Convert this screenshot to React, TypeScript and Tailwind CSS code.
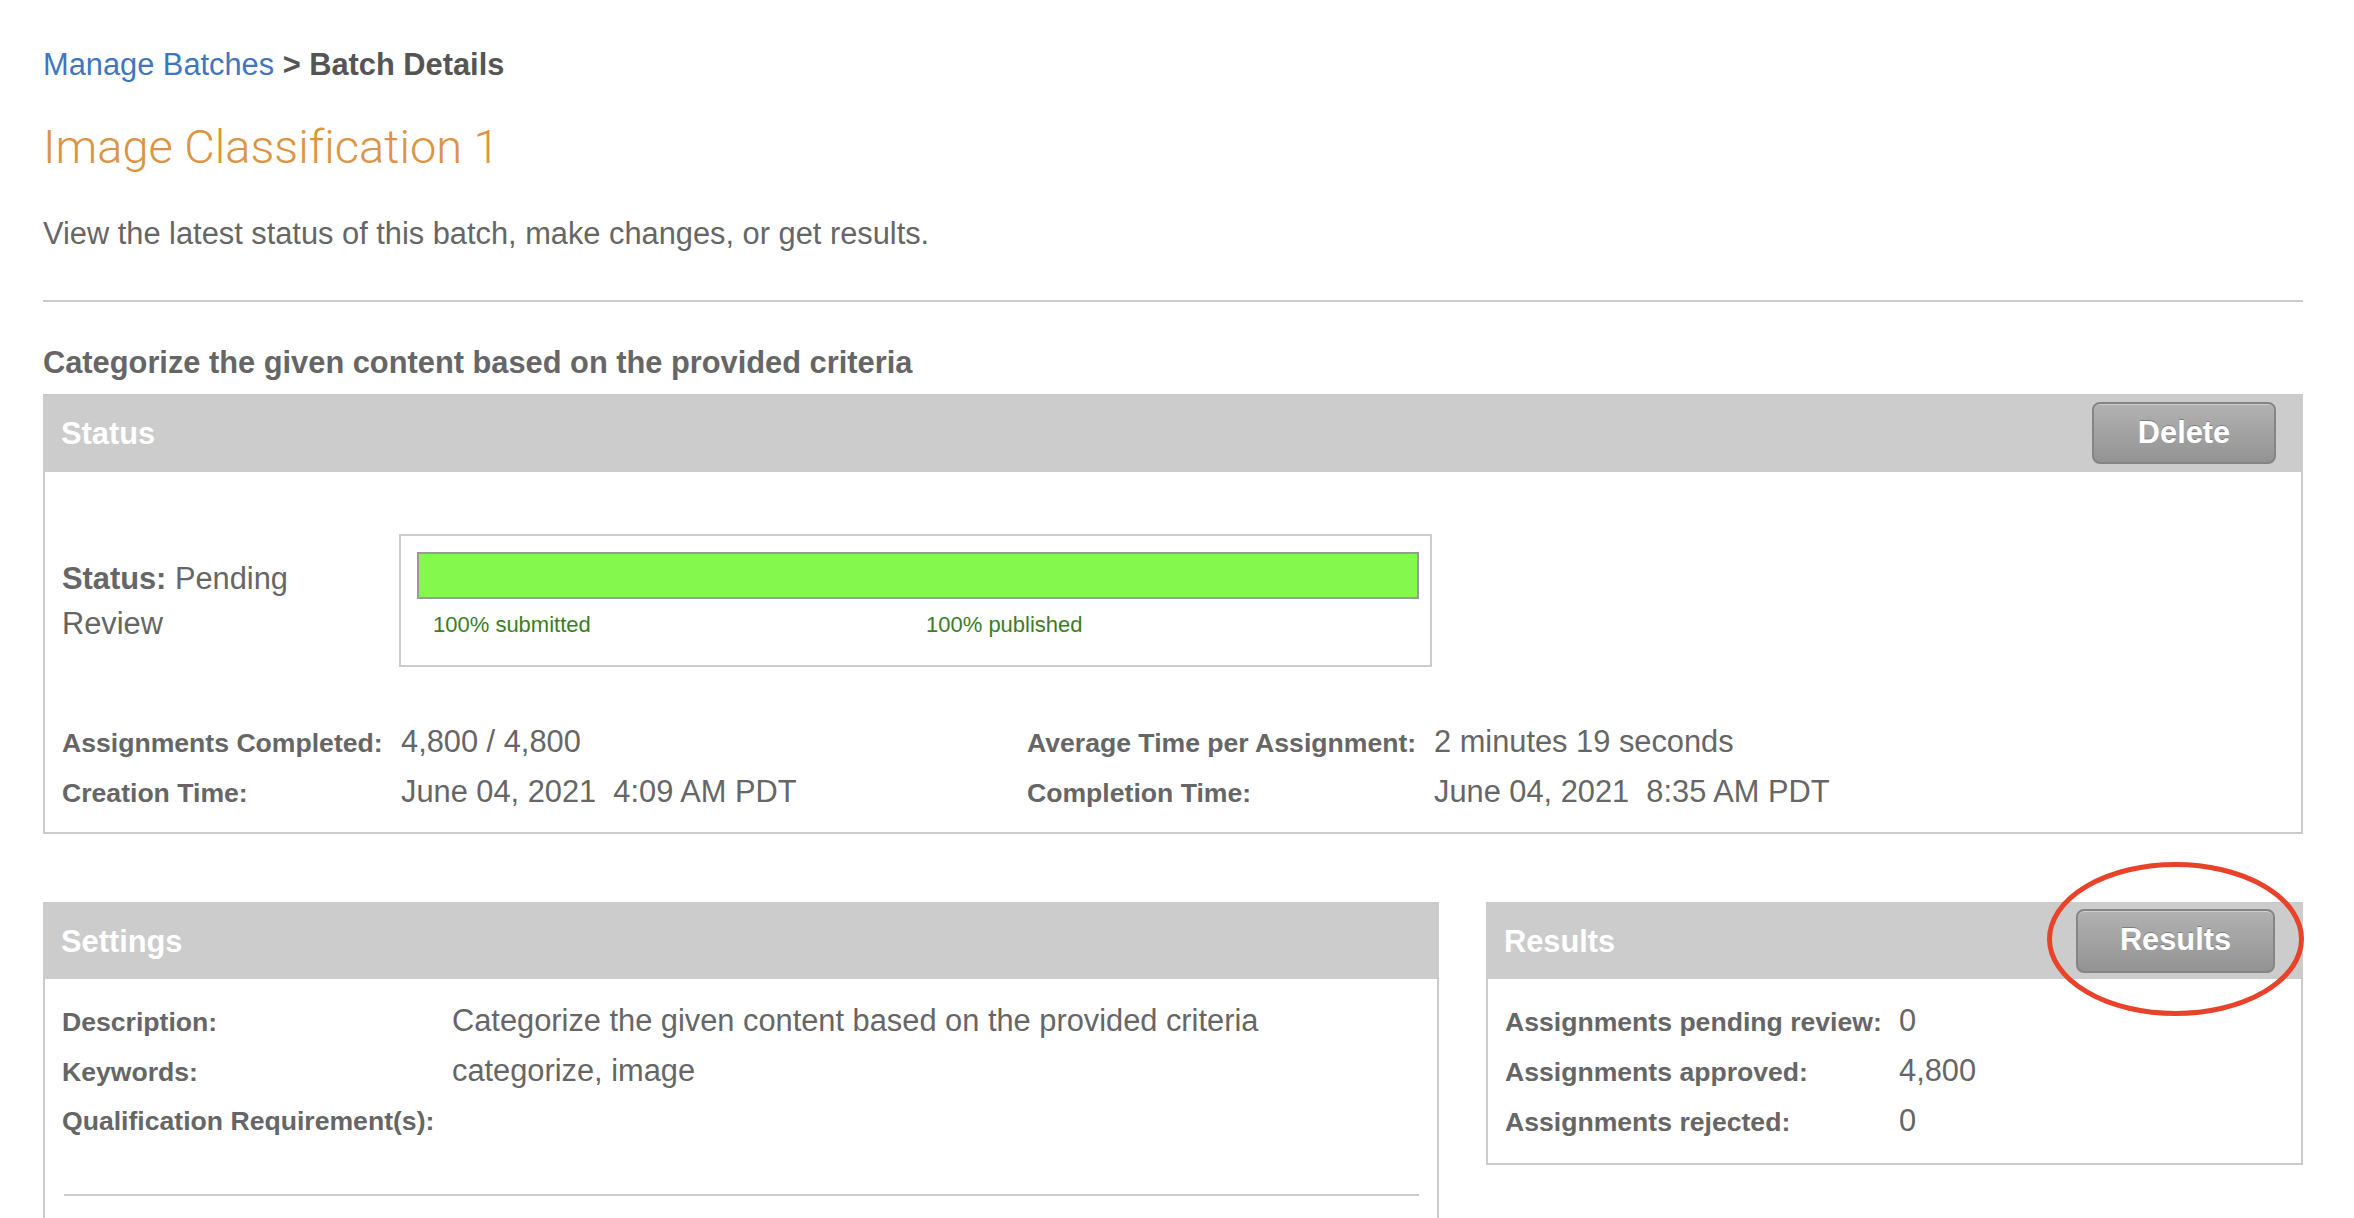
import React from "react";

function GrayButton({ label, className }: { label: string; className: string }) {
  return (
    <button
      type="button"
      className={`flex items-center justify-center rounded-[8px] border-2 border-[#858585] bg-linear-to-b from-[#b2b2b2] to-[#939393] text-[30.8px] font-bold text-white shadow-[inset_0_1px_0_rgba(255,255,255,0.35)] [text-shadow:0_-1px_0_rgba(0,0,0,0.25)] ${className}`}
    >
      {label}
    </button>
  );
}

function PanelHeader({ title, children }: { title: string; children?: React.ReactNode }) {
  return (
    <div className="flex h-[77px] items-center justify-between bg-[#cccccc] pl-[18px] pr-[28px]">
      <span className="pt-[3px] text-[30.8px] font-bold text-white">{title}</span>
      {children}
    </div>
  );
}

function InfoGrid({ rows, cols }: { rows: [string, string][]; cols: string }) {
  return (
    <div className={`grid auto-rows-[50px] items-baseline leading-[50px] ${cols}`}>
      {rows.map(([label, value]) => (
        <React.Fragment key={label}>
          <span className="text-[26.6px] font-bold">{label}</span>
          <span className="text-[30.8px]">{value}</span>
        </React.Fragment>
      ))}
    </div>
  );
}

const stats: [string, string][] = [
  ["Assignments Completed:", "4,800 / 4,800"],
  ["Average Time per Assignment:", "2 minutes 19 seconds"],
  ["Creation Time:", "June 04, 2021\u00a0\u00a04:09 AM PDT"],
  ["Completion Time:", "June 04, 2021\u00a0\u00a08:35 AM PDT"],
];

const settings: [string, string][] = [
  ["Description:", "Categorize the given content based on the provided criteria"],
  ["Keywords:", "categorize, image"],
  ["Qualification Requirement(s):", ""],
];

const results: [string, string][] = [
  ["Assignments pending review:", "0"],
  ["Assignments approved:", "4,800"],
  ["Assignments rejected:", "0"],
];

export default function App() {
  return (
    <div className="min-h-screen overflow-hidden bg-white pl-[43px] pr-[51px] pt-[47px] font-['Liberation_Sans',Arial,sans-serif] text-[#666]">
      {/* breadcrumb */}
      <div className="text-[30.8px] leading-[36px]">
        <a className="text-[#3f76bf]" href="#">
          Manage Batches
        </a>
        <span className="font-bold text-[#555]"> &gt; Batch Details</span>
      </div>

      <h1 className="mt-[35px] font-['Roboto',sans-serif] text-[47px] font-light leading-[58px] text-[#dc9440] [font-variant-ligatures:none]">
        Image Classification 1
      </h1>

      <p className="mt-[40px] text-[30.8px] leading-[36px]">
        View the latest status of this batch, make changes, or get results.
      </p>

      <div className="mt-[48px] h-[2px] bg-[#cccccc]" />

      <h2 className="mt-[43px] text-[30.8px] font-bold leading-[36px]">
        Categorize the given content based on the provided criteria
      </h2>

      {/* status panel */}
      <section className="mt-[13px]">
        <div className="flex h-[78px] items-center justify-between bg-[#cccccc] pl-[18px] pr-[27px]">
          <span className="pt-[3px] text-[30.8px] font-bold text-white">Status</span>
          <GrayButton label="Delete" className="h-[62px] w-[184px]" />
        </div>
        <div className="border-2 border-t-0 border-[#cccccc] pb-[15px] pl-[17px] pt-[62px]">
          <div className="flex items-center">
            <div className="w-[337px] text-[30.8px] leading-[45px]">
              <div>
                <span className="font-bold">Status:</span> Pending
              </div>
              <div>Review</div>
            </div>
            <div className="w-[1033px] border-2 border-[#cccccc] pb-[27px] pl-[16px] pr-[11px] pt-[16px]">
              <div className="h-[47px] border-2 border-[#9a9a9a] bg-[#84f84c]" />
              <div className="mt-[13px] grid grid-cols-2 text-[22px] leading-[26px] text-[#3b7d23]">
                <span className="pl-[16px]">100% submitted</span>
                <span className="pl-[8px]">100% published</span>
              </div>
            </div>
          </div>

          <div className="mt-[50px]">
            <InfoGrid rows={stats} cols="grid-cols-[339px_626px_407px_1fr]" />
          </div>
        </div>
      </section>

      {/* settings and results */}
      <div className="mt-[68px] flex items-start gap-[47px]">
        <section className="w-[1396px] shrink-0">
          <PanelHeader title="Settings" />
          <div className="border-2 border-t-0 border-[#cccccc] pb-[120px] pl-[17px] pr-[18px] pt-[17px]">
            <InfoGrid rows={settings} cols="grid-cols-[390px_1fr]" />
            <div className="ml-[2px] mt-[48px] h-[2px] bg-[#cccccc]" />
          </div>
        </section>

        <section className="relative flex-1">
          <PanelHeader title="Results">
            <GrayButton label="Results" className="h-[64px] w-[199px]" />
          </PanelHeader>
          <div className="border-2 border-t-0 border-[#cccccc] pb-[17px] pl-[17px] pt-[17px]">
            <InfoGrid rows={results} cols="grid-cols-[394px_1fr]" />
          </div>

          {/* hand-drawn highlight ring around the Results button */}
          <svg
            className="pointer-events-none absolute left-[561px] top-[-40px] overflow-visible"
            width="257"
            height="154"
            viewBox="0 0 257 154"
          >
            <ellipse cx="128.5" cy="77" rx="126" ry="74.5" fill="none" stroke="#e8432a" strokeWidth="5" />
          </svg>
        </section>
      </div>
    </div>
  );
}
